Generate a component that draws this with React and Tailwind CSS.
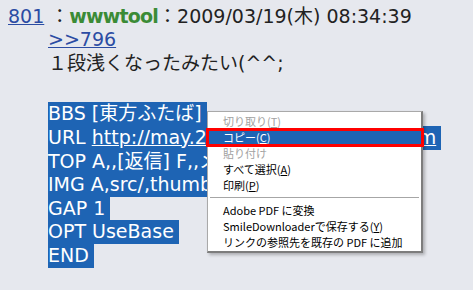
import React from "react";

const rows = [
  { key: "bbs", body: "BBS [東方ふたば]" },
  {
    key: "url",
    body: (
      <>
        URL <span className="underline">http://may.2chan.net/src/futaba.htm</span>
      </>
    ),
  },
  { key: "top", body: "TOP A,,[返信] F,,メール" },
  { key: "img", body: "IMG A,src/,thumb/" },
  { key: "gap", body: "GAP 1" },
  { key: "opt", body: "OPT UseBase" },
  { key: "end", body: "END" },
];

function Acc({ k }) {
  return (
    <>
      (<span className="underline">{k}</span>)
    </>
  );
}

function Item({ children, disabled, active }) {
  return (
    <div
      className={
        "flex h-[16px] items-center whitespace-nowrap px-[15px] " +
        (active ? "bg-[#1e64b4] text-white" : disabled ? "text-[#a2a2a2]" : "text-black")
      }
    >
      {children}
    </div>
  );
}

function ContextMenu() {
  return (
    <div className="absolute left-[207px] top-[111px] w-[216px] border border-r-2 border-b-2 border-[#a9a9a9] border-r-[#7d7d7d] border-b-[#7d7d7d] bg-white py-[1px] font-['Noto_Sans_CJK_JP',sans-serif] text-[11px] leading-[16px] shadow-[2px_2px_3px_rgba(0,0,0,0.25)]">
      <Item disabled>
        切り取り<Acc k="T" />
      </Item>
      <Item active>
        コピー<Acc k="C" />
      </Item>
      <Item disabled>貼り付け</Item>
      <Item>
        すべて選択<Acc k="A" />
      </Item>
      <Item>
        印刷<Acc k="P" />
      </Item>
      <div className="flex h-[9px] items-center px-[2px]">
        <div className="h-px w-full bg-[#a6a6a6]" />
      </div>
      <Item>Adobe PDF に変換</Item>
      <Item>
        SmileDownloaderで保存する<Acc k="Y" />
      </Item>
      <Item>リンクの参照先を既存の PDF に追加</Item>
      {/* red annotation box around the copy item */}
      <div className="absolute left-[-2px] top-[16px] h-[19px] w-[218px] border-[3px] border-[#ff0000]" />
    </div>
  );
}

export default function App() {
  return (
    <div className="relative h-[290px] w-[473px] overflow-hidden bg-[#e6e8ee] font-['DejaVu_Sans','Noto_Sans_CJK_JP',sans-serif] text-[19px] leading-[23.6px] text-[#222]">
      <div className="whitespace-nowrap pl-[8px] pt-[4.6px]">
        <a className="text-[#2b4ca3] underline">801</a> ：
        <b className="tracking-[-0.8px] text-[#3b8b36]">wwwtool</b>：2009/03/19(木) 08:34:39
      </div>
      <div className="pl-[48px]">
        <div>
          <a className="text-[#2b4ca3] underline">&gt;&gt;796</a>
        </div>
        <div className="whitespace-nowrap">１段浅くなったみたい(^^;</div>
        <div className="mt-[27px] text-white">
          {rows.map((r) => (
            <div key={r.key} className="w-fit whitespace-nowrap bg-[#1e64b4] pr-[5px]">
              {r.body}
            </div>
          ))}
        </div>
      </div>
      <ContextMenu />
    </div>
  );
}
